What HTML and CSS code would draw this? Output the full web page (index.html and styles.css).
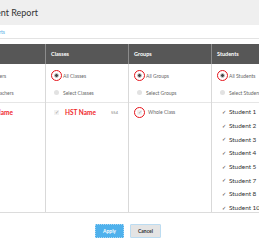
FILE: index.html
```html
<!DOCTYPE html>
<html lang="en">
<head>
  <meta charset="UTF-8" />
  <title>Student Report</title>
  <link rel="stylesheet" href="styles.css">
</head>
<body>
  <div class="page">
    <header class="title-bar">
      <h1>Student Report</h1>
    </header>

    <div class="crumbs"><a href="#">Reports</a></div>

    <div class="report-table">
      <div class="col">
        <div class="col-head">Teachers</div>
        <div class="col-options">
          <label class="opt"><span class="radio on"></span>All Teachers</label>
          <label class="opt"><span class="radio"></span>Select Teachers</label>
        </div>
        <div class="col-list">
          <div class="item"><span class="check"></span><span class="name">HST Name</span></div>
        </div>
      </div>

      <div class="col">
        <div class="col-head">Classes</div>
        <div class="col-options">
          <label class="opt"><span class="radio on marked"></span>All Classes</label>
          <label class="opt"><span class="radio"></span>Select Classes</label>
        </div>
        <div class="col-list">
          <div class="item"><span class="check">&#10003;</span><span class="name">HST Name</span><span class="count">554</span></div>
        </div>
      </div>

      <div class="col">
        <div class="col-head">Groups</div>
        <div class="col-options">
          <label class="opt"><span class="radio on marked"></span>All Groups</label>
          <label class="opt"><span class="radio"></span>Select Groups</label>
        </div>
        <div class="col-list">
          <div class="item"><span class="check marked">&#10003;</span>Whole Class</div>
        </div>
      </div>

      <div class="col">
        <div class="col-head">Students</div>
        <div class="col-options">
          <label class="opt"><span class="radio on marked"></span>All Students</label>
          <label class="opt"><span class="radio"></span>Select Students</label>
        </div>
        <div class="col-list students">
          <div class="student"><span class="tick">&#10003;</span>Student 1</div>
          <div class="student"><span class="tick">&#10003;</span>Student 2</div>
          <div class="student"><span class="tick">&#10003;</span>Student 3</div>
          <div class="student"><span class="tick">&#10003;</span>Student 4</div>
          <div class="student"><span class="tick">&#10003;</span>Student 5</div>
          <div class="student"><span class="tick">&#10003;</span>Student 7</div>
          <div class="student"><span class="tick">&#10003;</span>Student 8</div>
          <div class="student"><span class="tick">&#10003;</span>Student 10</div>
        </div>
      </div>
    </div>

    <div class="actions">
      <button class="btn apply">Apply</button>
      <button class="btn cancel">Cancel</button>
    </div>
  </div>
</body>
</html>
```

FILE: styles.css
```css
body {
  margin: 0;
  padding: 0;
  background: #fff;
  font-family: 'Lato', 'Open Sans', sans-serif;
  overflow: hidden;
}

.page {
  width: 332px;
  margin-left: -38px;
}

.title-bar {
  height: 25px;
  background: #efefef;
  display: flex;
  align-items: center;
  padding-left: 16px;
}

.title-bar h1 {
  margin: 0;
  font-size: 9px;
  font-weight: 400;
  color: #333;
}

.crumbs {
  height: 13px;
  padding-left: 26px;
  border-bottom: 1px solid #e3e3e3;
  display: flex;
  align-items: center;
}

.crumbs a {
  font-size: 5px;
  color: #5aaee6;
  text-decoration: none;
}

.report-table {
  margin-top: 5px;
  display: grid;
  grid-template-columns: repeat(4, 83px);
  border-bottom: 1px solid #dcdcdc;
}

.col {
  border-left: 1px solid #d9d9d9;
}

.col-head {
  height: 20px;
  background: #575757;
  color: #fff;
  font-size: 5.5px;
  font-weight: 700;
  display: flex;
  align-items: center;
  padding-left: 5px;
  box-shadow: -1px 0 0 #8c8c8c;
}

.col-options {
  padding: 3px 0 1px;
  border-bottom: 1px solid #e6e6e6;
}

.opt {
  height: 17px;
  display: flex;
  align-items: center;
  font-size: 5px;
  color: #666;
  padding-left: 8px;
}

.radio {
  position: relative;
  width: 5px;
  height: 5px;
  border-radius: 50%;
  background: #e2e2e2;
  margin-right: 4px;
  box-sizing: border-box;
}

.radio.on {
  background: #444;
  border: 1px solid #d0d0d0;
}

.marked::after {
  content: "";
  position: absolute;
  left: 50%;
  top: 50%;
  width: 11px;
  height: 11px;
  margin: -5.5px 0 0 -5.5px;
  border: 1.5px solid #e5141b;
  border-radius: 50%;
  box-sizing: border-box;
}

.col-list {
  height: 109px;
  overflow: hidden;
  padding-top: 2px;
  box-sizing: border-box;
}

.item {
  height: 14px;
  display: flex;
  align-items: center;
  padding-left: 8px;
  font-size: 5px;
  color: #666;
}

.check {
  position: relative;
  width: 5px;
  height: 5px;
  margin-right: 6px;
  font-size: 5px;
  line-height: 5px;
  text-align: center;
  color: #999;
  background: #f2f2f2;
}

.name {
  font-size: 6.5px;
  font-weight: 700;
  color: #f0282d;
}

.count {
  margin-left: auto;
  padding-right: 10px;
  font-size: 4px;
  color: #777;
}

.student {
  height: 13.7px;
  display: flex;
  align-items: center;
  padding-left: 10px;
  font-size: 6.4px;
  color: #333;
}

.tick {
  font-size: 5px;
  color: #333;
  margin-right: 3px;
}

.actions {
  display: flex;
  justify-content: center;
  gap: 6px;
  margin-top: 11px;
}

.btn {
  height: 14px;
  padding: 0;
  font-family: inherit;
  font-size: 5px;
  font-weight: 700;
  border-radius: 1px;
  cursor: pointer;
}

.apply {
  width: 29px;
  background: #4fb1ec;
  color: #fff;
  border: 1px dotted #a6d6f4;
}

.cancel {
  width: 31px;
  background: #e4e4e4;
  color: #333;
  border: 1px solid #bcdcf1;
}
```
